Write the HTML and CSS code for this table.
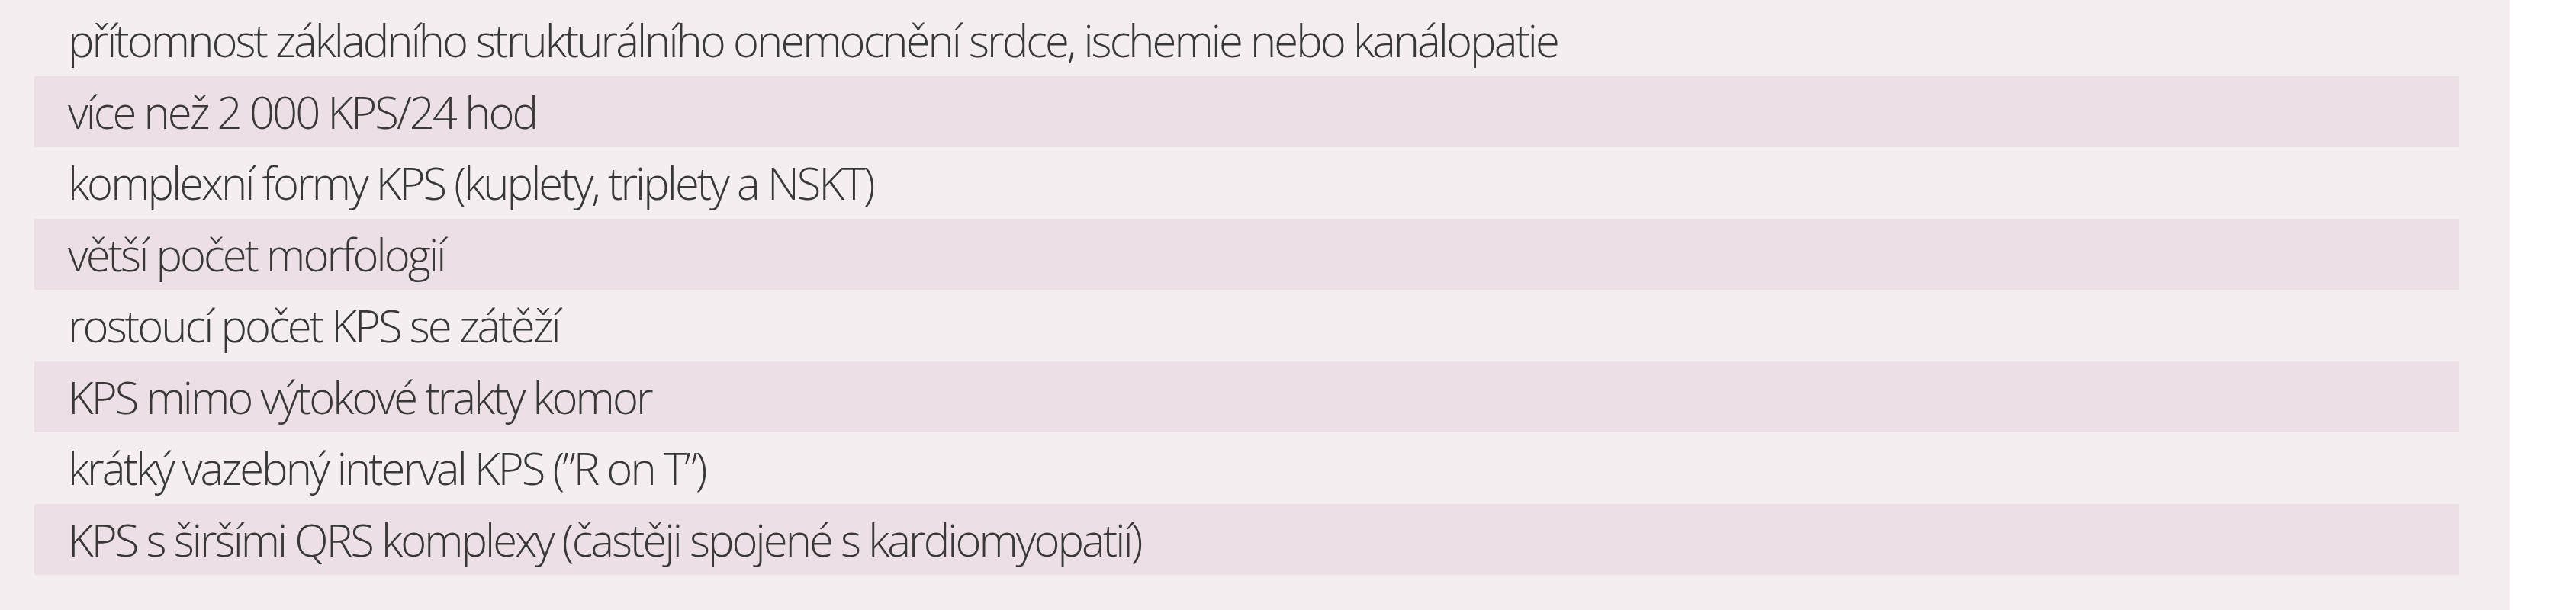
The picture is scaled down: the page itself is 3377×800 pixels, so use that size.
FILE: index.html
```html
<!DOCTYPE html>
<html lang="cs">
<head>
<meta charset="utf-8">
<title>KPS</title>
<link rel="stylesheet" href="styles.css">
</head>
<body>
<div class="panel">
  <ul class="list">
    <li class="row">přítomnost základního strukturálního onemocnění srdce, ischemie nebo kanálopatie</li>
    <li class="row alt">více než 2 000 KPS/24 hod</li>
    <li class="row">komplexní formy KPS (kuplety, triplety a NSKT)</li>
    <li class="row alt">větší počet morfologií</li>
    <li class="row">rostoucí počet KPS se zátěží</li>
    <li class="row alt">KPS mimo výtokové trakty komor</li>
    <li class="row">krátký vazebný interval KPS (”R on T”)</li>
    <li class="row alt">KPS s širšími QRS komplexy (častěji spojené s kardiomyopatií)</li>
  </ul>
</div>
</body>
</html>
```
FILE: styles.css
```css
html, body {
  margin: 0;
  padding: 0;
  background: #ffffff;
}
.panel {
  width: 3290px;
  height: 800px;
  background: #f5eef1;
  box-sizing: border-box;
  padding: 6px 66px 0 45px;
}
.list {
  list-style: none;
  margin: 0;
  padding: 0;
}
.row {
  height: 93.5px;
  display: flex;
  align-items: center;
  padding-left: 44px;
  font-family: "Open Sans", "Noto Sans", sans-serif;
  font-weight: 300;
  font-size: 58px;
  letter-spacing: -2.95px;
  color: #383838;
  white-space: nowrap;
}
.row.alt {
  background: #ecdfe5;
}
```
